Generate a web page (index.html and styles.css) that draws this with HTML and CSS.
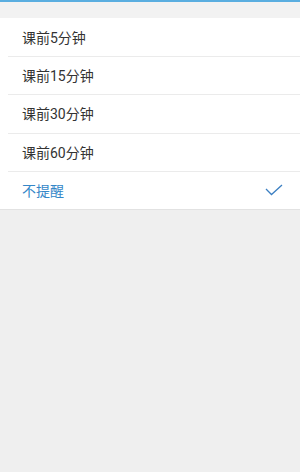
FILE: index.html
```html
<!DOCTYPE html>
<html lang="zh-CN">
<head>
    <meta charset="UTF-8">
    <meta name="viewport" content="width=device-width, initial-scale=1.0">
    <title>提醒</title>
    <link rel="stylesheet" href="styles.css">
</head>
<body>
<div class="top-line"></div>
<div class="gap"></div>
<ul class="options">
    <li class="option">课前5分钟</li>
    <li class="option">课前15分钟</li>
    <li class="option">课前30分钟</li>
    <li class="option">课前60分钟</li>
    <li class="option active">
        <span>不提醒</span>
        <svg class="check" width="18" height="12" viewBox="0 0 18 12">
            <path d="M1 5 L6.5 10.5 L17 1" fill="none" stroke="#3b7fc2" stroke-width="1.3"/>
        </svg>
    </li>
</ul>
</body>
</html>
```

FILE: styles.css
```css
* {
    box-sizing: border-box;
    margin: 0;
    padding: 0;
}
body {
    font-family: Roboto, "Noto Sans CJK SC", sans-serif;
    background-color: #efefef;
    color: #333;
    height: 472px;
}
.top-line {
    height: 2px;
    background-color: #5aaee0;
}
.gap {
    height: 16px;
    background-color: #f2f2f2;
}
.options {
    list-style: none;
    background-color: #fff;
    border-bottom: 1px solid #e2e2e2;
}
.option {
    position: relative;
    height: 38.2px;
    display: flex;
    align-items: center;
    justify-content: space-between;
    padding: 0 17px 0 22px;
    font-size: 14px;
}
.option + .option::before {
    content: "";
    position: absolute;
    left: 8px;
    right: 0;
    top: 0;
    height: 1px;
    background-color: #ebebeb;
}
.option.active {
    color: #3587c8;
}
```
